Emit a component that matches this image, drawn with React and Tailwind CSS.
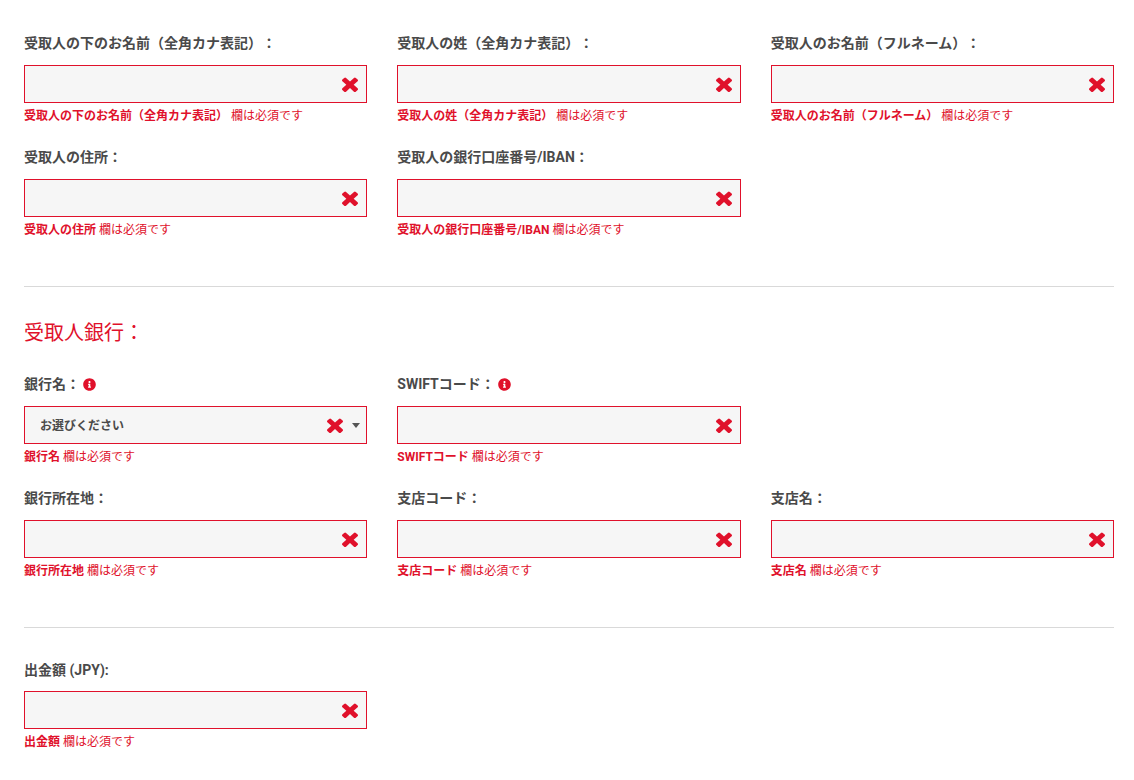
import { FaInfoCircle } from 'react-icons/fa';

const FONT = "font-['Roboto','Noto_Sans_CJK_JP',sans-serif]";

function CrossIcon({ className }) {
  return (
    <svg viewBox="302 238 1188 1316" preserveAspectRatio="none" fill="currentColor" className={className}>
      <path d="M1490 1322q0 40-28 68l-136 136q-28 28-68 28t-68-28l-294-294-294 294q-28 28-68 28t-68-28l-136-136q-28-28-28-68t28-68l294-294-294-294q-28-28-28-68t28-68l136-136q28-28 68-28t68 28l294 294 294-294q28-28 68-28t68 28l136 136q28 28 28 68t-28 68l-294 294 294 294q28 28 28 68z" />
    </svg>
  );
}

function Field({ label, name, info, select, compact }) {
  const errorName = name || label.replace(/[:：]$/, '').trim();
  return (
    <div className="h-[114px]">
      <label className={`flex items-center h-[22px] text-sm font-bold leading-[22px] text-[#4a4a4a] ${compact ? 'mb-[10px]' : 'mb-[11px]'}`}>
        {label}
        {info && <FaInfoCircle className="ml-[3px] mt-px text-[#e0112b]" size={13} />}
      </label>
      <div className="relative h-[38px]">
        {select ? (
          <div className="flex items-center h-full pl-[15px] pt-px border border-[#e0112b] bg-[#f6f6f6] text-xs font-bold text-[#4a4a4a]">
            お選びください
          </div>
        ) : (
          <input className="block w-full h-full border border-[#e0112b] bg-[#f6f6f6] outline-none" />
        )}
        <CrossIcon className={`absolute top-[11px] w-4 h-4 text-[#e0112b] ${select ? 'right-[24px]' : 'right-[9px]'}`} />
        {select && (
          <svg viewBox="0 0 8 5" className="absolute top-[17px] right-[7px] w-2 h-[5px] text-[#555555]" fill="currentColor">
            <polygon points="0,0 8,0 4,5" />
          </svg>
        )}
      </div>
      <p className="mt-[4px] text-xs leading-[18px] text-[#e0112b]">
        <strong className="font-bold">{errorName}</strong> 欄は必須です
      </p>
    </div>
  );
}

export default function App() {
  return (
    <div className={`${FONT} [text-spacing-trim:space-all] w-[1134px] h-[780px] overflow-hidden bg-white px-[20px] pt-[32px]`}>
      <div className="ml-[4px] w-[1090px]">
        {/* Recipient */}
        <div className="grid grid-cols-3 gap-x-[30px]">
          <Field label="受取人の下のお名前（全角カナ表記）：" />
          <Field label="受取人の姓（全角カナ表記）：" />
          <Field label="受取人のお名前（フルネーム）：" />
          <Field label="受取人の住所：" />
          <Field label="受取人の銀行口座番号/IBAN：" />
        </div>

        <hr className="mt-[26px] border-t border-[#d9d9d9]" />

        {/* Bank */}
        <h3 className="mt-[31px] h-[30px] text-xl leading-[30px] text-[#e0112b]">受取人銀行：</h3>
        <div className="mt-[25px] grid grid-cols-3 gap-x-[30px]">
          <Field label="銀行名：" info select />
          <Field label="SWIFTコード：" info />
          <div />
          <Field label="銀行所在地：" />
          <Field label="支店コード：" />
          <Field label="支店名：" />
        </div>

        <hr className="mt-[26px] border-t border-[#d9d9d9]" />

        <div className="mt-[31px] grid grid-cols-3 gap-x-[30px]">
          <Field label="出金額 (JPY):" name="出金額" compact />
        </div>
      </div>
    </div>
  );
}
